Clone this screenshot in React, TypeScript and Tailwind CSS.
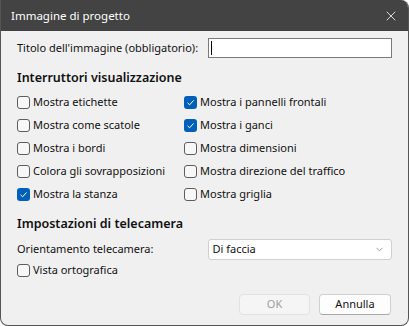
import { ChevronDown, X } from "lucide-react";

const left = [
  { label: "Mostra etichette", on: false },
  { label: "Mostra come scatole", on: false },
  { label: "Mostra i bordi", on: false },
  { label: "Colora gli sovrapposizioni", on: false },
  { label: "Mostra la stanza", on: true },
];

const right = [
  { label: "Mostra i pannelli frontali", on: true },
  { label: "Mostra i ganci", on: true },
  { label: "Mostra dimensioni", on: false },
  { label: "Mostra direzione del traffico", on: false },
  { label: "Mostra griglia", on: false },
];

function Check({ on, label, h = "h-[23px]" }: { on: boolean; label: string; h?: string }) {
  return (
    <div className={`flex items-center whitespace-nowrap ${h}`}>
      {on ? (
        <span className="w-[13px] h-[13px] rounded-[3px] bg-[#005fb8] flex items-center justify-center shrink-0">
          <svg width="9" height="9" viewBox="0 0 9 9">
            <path d="M1.5 4.8 L3.6 6.8 L7.6 2.4" fill="none" stroke="white" strokeWidth="1" />
          </svg>
        </span>
      ) : (
        <span className="w-[13px] h-[13px] rounded-[3px] border border-[#5d5d5d] bg-[#f7f7f7] shrink-0" />
      )}
      <span className="ml-[3px]">{label}</span>
    </div>
  );
}

export default function App() {
  return (
    <div
      className="w-[409px] h-[326px] bg-[#f0f0f0] border border-t-0 border-[#555] rounded-b-lg rounded-tr-lg overflow-hidden flex flex-col text-[11px] text-[#111]"
      style={{ fontFamily: '"Noto Sans", sans-serif' }}
    >
      <div className="h-[31px] bg-[#434343] flex items-center justify-between pl-[10px] pr-[9px] text-white shrink-0">
        <span className="text-[11.5px]">Immagine di progetto</span>
        <X size={16} strokeWidth={1.2} />
      </div>

      <div className="px-[16px] pt-[7px] flex flex-col">
        <div className="flex items-center h-[20px]">
          <span className="w-[192px] whitespace-nowrap">Titolo dell'immagine (obbligatorio):</span>
          <div className="w-[184px] h-[20px] bg-white border border-[#7a7a7a] flex items-center pl-[2px]">
            <span className="w-px h-[14px] bg-black" />
          </div>
        </div>

        <div className="font-semibold text-[12.5px] mt-[10px] h-[20px] flex items-center">Interruttori visualizzazione</div>
        <div className="grid grid-cols-[167px_1fr] mt-[3px]">
          <div className="flex flex-col">
            {left.map(c => <Check key={c.label} {...c} />)}
          </div>
          <div className="flex flex-col">
            {right.map(c => <Check key={c.label} {...c} />)}
          </div>
        </div>

        <div className="font-semibold text-[12.5px] mt-[8px] h-[20px] flex items-center">Impostazioni di telecamera</div>
        <div className="flex items-center mt-[5px]">
          <span className="w-[192px] whitespace-nowrap">Orientamento telecamera:</span>
          <div className="w-[184px] h-[21px] bg-white border border-[#d0d0d0] rounded-[3px] flex items-center justify-between pl-[3px] pr-[6px]">
            <span>Di faccia</span>
            <ChevronDown size={11} strokeWidth={1.2} className="text-[#555]" />
          </div>
        </div>
        <Check on={false} label="Vista ortografica" h="h-[20px]" />

        <div className="flex justify-end gap-[9px] mt-[14px] pr-[1px]">
          <div className="w-[71px] h-[21px] rounded-[4px] border border-[#e2e2e2] bg-[#f5f5f5] text-[#9d9d9d] flex items-center justify-center">OK</div>
          <div className="w-[72px] h-[21px] rounded-[4px] border border-[#d0d0d0] border-b-[#a8a8a8] bg-[#fdfdfd] flex items-center justify-center">Annulla</div>
        </div>
      </div>
    </div>
  );
}
